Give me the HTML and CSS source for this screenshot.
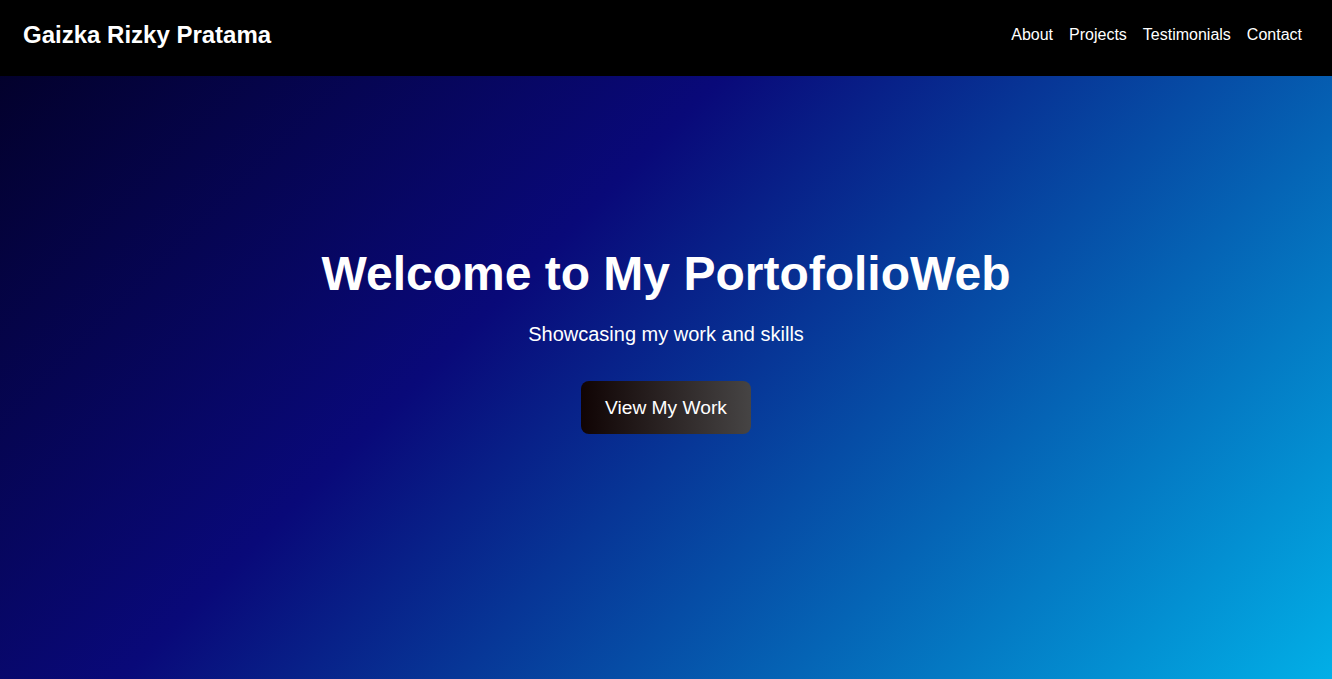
FILE: index.html
```html
<!DOCTYPE html>
<html lang="en">
<head>
<meta charset="UTF-8">
<title>Gaizka Rizky Pratama</title>
<link rel="stylesheet" href="styles.css">
</head>
<body>
<header class="site-header">
  <div class="logo">Gaizka Rizky Pratama</div>
  <nav class="nav">
    <a href="#about">About</a>
    <a href="#projects">Projects</a>
    <a href="#testimonials">Testimonials</a>
    <a href="#contact">Contact</a>
  </nav>
</header>
<section class="hero">
  <h1 class="hero-title">Welcome to My PortofolioWeb</h1>
  <p class="hero-sub">Showcasing my work and skills</p>
  <a class="btn" href="#projects">View My Work</a>
</section>
</body>
</html>
```
FILE: styles.css
```css
* { box-sizing: border-box; }
html, body { margin: 0; padding: 0; }
body {
  font-family: "Liberation Sans", Arial, sans-serif;
  color: #fff;
  background: #fff;
}
.site-header {
  position: fixed;
  top: 0; left: 0; right: 0;
  height: 76px;
  background: #000;
  display: flex;
  align-items: center;
  justify-content: space-between;
  padding: 0 30px 6px 23px;
  z-index: 10;
}
.logo {
  font-size: 24px;
  font-weight: bold;
}
.nav {
  display: flex;
  gap: 16px;
}
.nav a {
  color: #fff;
  text-decoration: none;
  font-size: 16px;
}
.hero {
  height: 100vh;
  background-image: linear-gradient(135deg, #020024 0%, #090979 35%, #00d4ff 100%);
  background-size: 100% 950px;
  background-repeat: no-repeat;
  display: flex;
  flex-direction: column;
  align-items: center;
  justify-content: center;
  text-align: center;
}
.hero-title {
  font-size: 48px;
  font-weight: bold;
  margin: 0 0 22px;
}
.hero-sub {
  font-size: 20px;
  margin: 0 0 35px;
}
.btn {
  display: inline-block;
  padding: 15px 24px;
  font-size: 19.2px;
  line-height: 23px;
  color: #fff;
  text-decoration: none;
  border-radius: 8px;
  background: linear-gradient(90deg, #100404, #464444);
}
```
